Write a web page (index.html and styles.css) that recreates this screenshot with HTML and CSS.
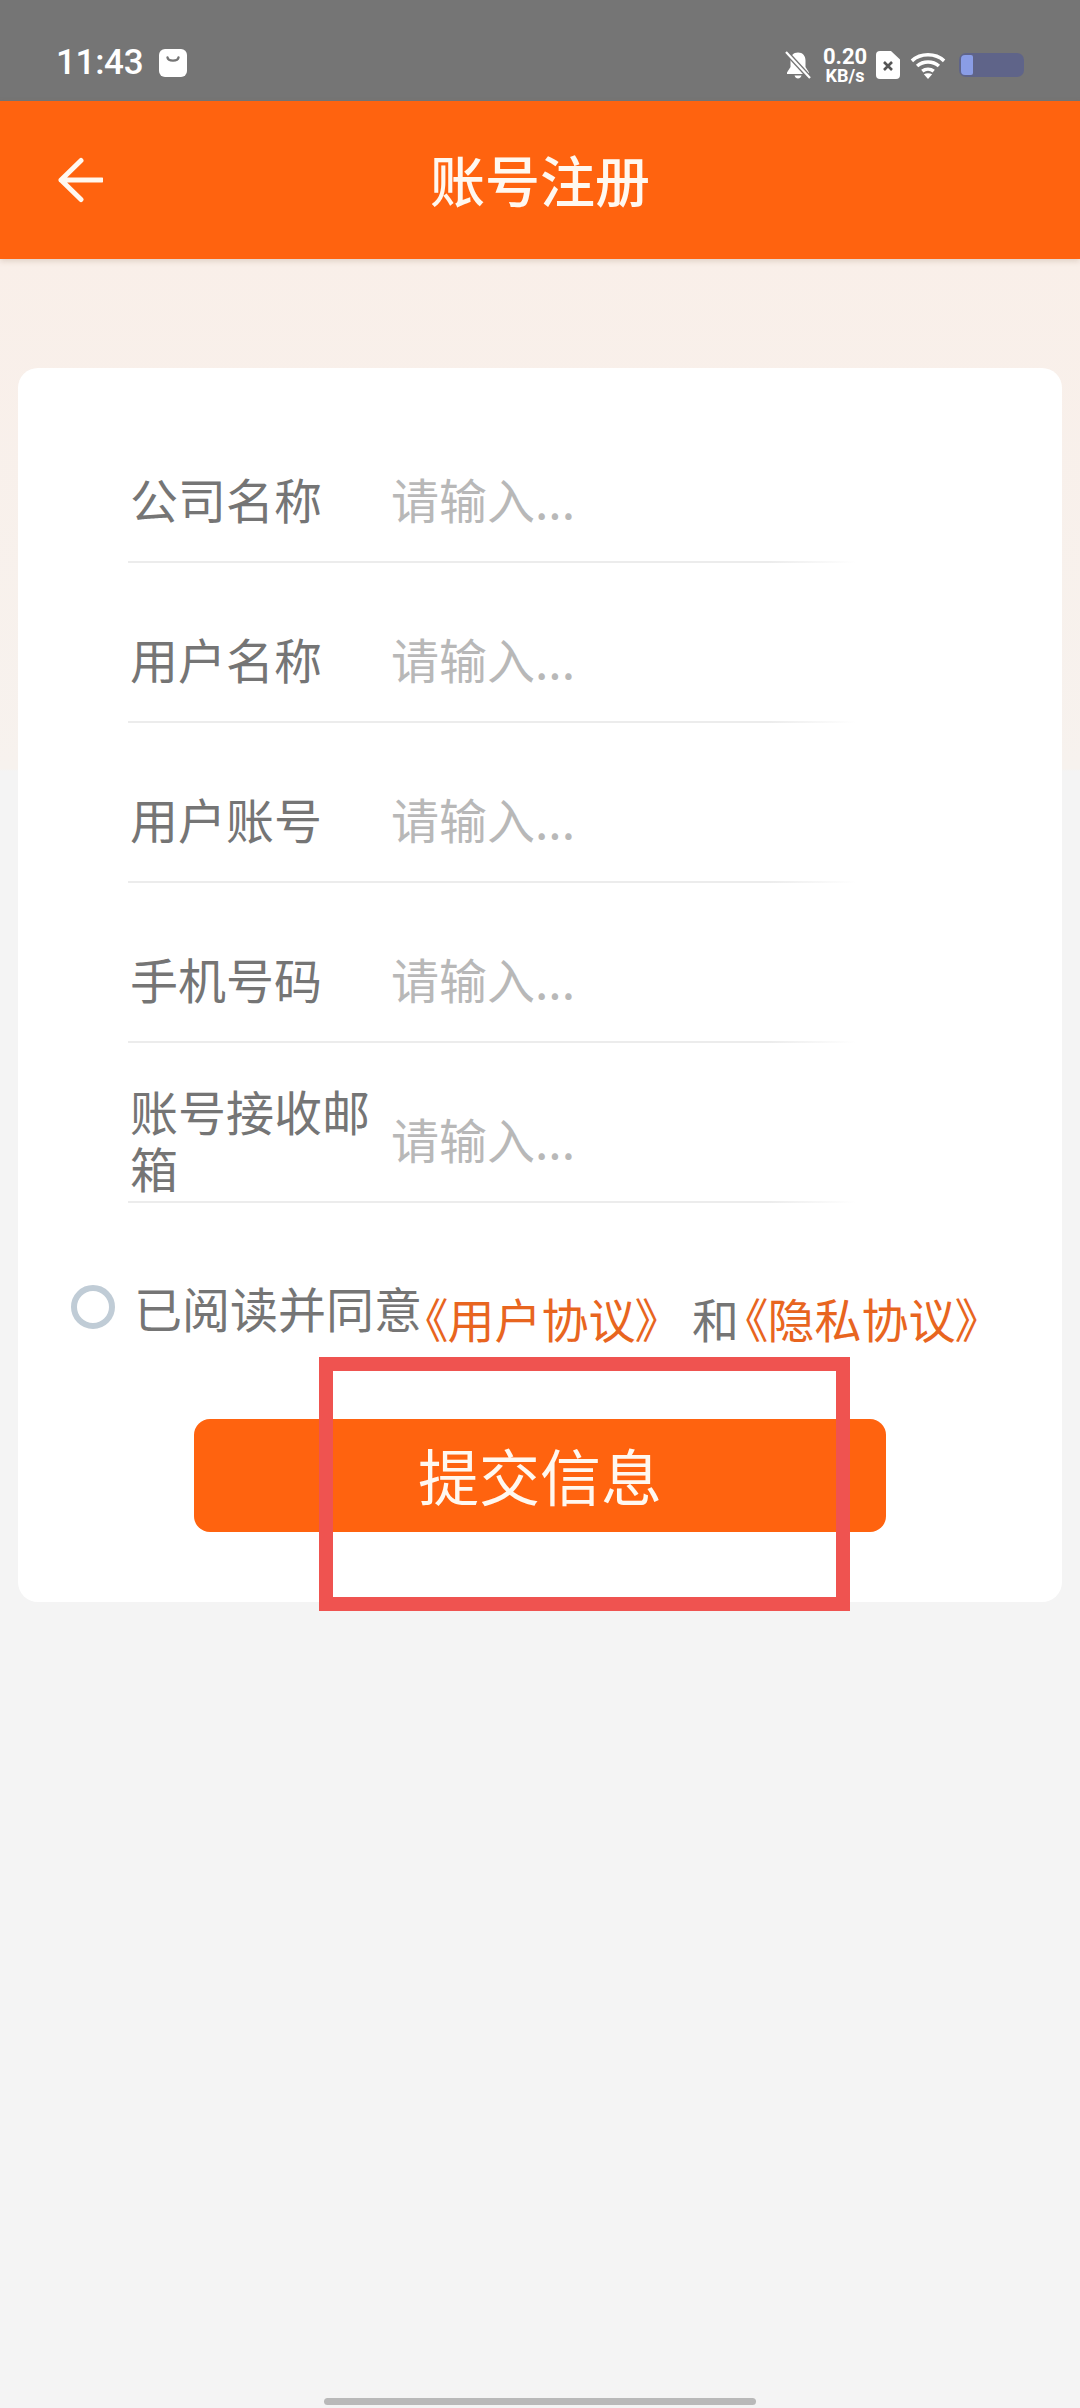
FILE: index.html
```html
<!DOCTYPE html>
<html lang="zh-CN">
<head>
    <meta charset="UTF-8">
    <meta name="viewport" content="width=device-width, initial-scale=1.0">
    <title>账号注册</title>
    <link rel="stylesheet" href="styles.css">
</head>
<body>
    <div class="page">
        <div class="status-bar">
            <div class="status-left">
                <span class="clock">11:43</span>
                <svg class="icon-bag" viewBox="0 0 28 28">
                    <rect width="28" height="28" rx="6" fill="#fff"/>
                    <path d="M8.500 8.500c.8 4.200 10.200 4.200 11 0" fill="none" stroke="#757575" stroke-width="2.400" stroke-linecap="round"/>
                </svg>
            </div>
            <div class="status-right">
                <svg class="icon-bell" viewBox="0 0 26 28">
                    <path d="M13 1.500c-4.800 0-7.500 3.400-7.500 8v6.500L2 21.500v1.500h22v-1.500L20.500 16V9.500c0-4.600-2.700-8-7.500-8z" fill="#fff"/>
                    <path d="M9.500 24.500h7c-.5 2-2 3-3.500 3s-3-1-3.500-3z" fill="#fff"/>
                    <path d="M1 1l24 26" stroke="#757575" stroke-width="5"/>
                    <path d="M1 1l24 26" stroke="#fff" stroke-width="2.200"/>
                </svg>
                <div class="net-speed">
                    <span class="net-value">0.20</span>
                    <span class="net-unit">KB/s</span>
                </div>
                <svg class="icon-sim" viewBox="0 0 24 28">
                    <path d="M4 0h11l9 8.500V24a4 4 0 0 1-4 4H4a4 4 0 0 1-4-4V4a4 4 0 0 1 4-4z" fill="#fff"/>
                    <path d="M8 11l8 8M16 11l-8 8" stroke="#555" stroke-width="2.600"/>
                </svg>
                <svg class="icon-wifi" viewBox="0 0 34 26">
                    <path d="M1.500 8.500C10 .8 24 .8 32.500 8.500M6.500 13.500c6-5.200 15-5.200 21 0M11.500 18.500c3.200-2.600 7.800-2.600 11 0" fill="none" stroke="#fff" stroke-width="3.400"/>
                    <path d="M13 21.500c2.200-1.500 5.800-1.500 8 0L17 26z" fill="#fff"/>
                </svg>
                <div class="battery"><div class="battery-level"></div></div>
            </div>
        </div>

        <header class="top-bar">
            <svg class="icon-back" viewBox="0 0 46 46">
                <path d="M24 3.500L4 23l20 19.500M4 23h41" fill="none" stroke="#fff8f0" stroke-width="5" stroke-linecap="round" stroke-linejoin="round"/>
            </svg>
            <h1 class="top-title">账号注册</h1>
        </header>

        <main class="content">
            <section class="card">
                <div class="form">
                    <div class="form-row">
                        <div class="form-label">公司名称</div>
                        <div class="form-input">请输入...</div>
                    </div>
                    <div class="form-row">
                        <div class="form-label">用户名称</div>
                        <div class="form-input">请输入...</div>
                    </div>
                    <div class="form-row">
                        <div class="form-label">用户账号</div>
                        <div class="form-input">请输入...</div>
                    </div>
                    <div class="form-row">
                        <div class="form-label">手机号码</div>
                        <div class="form-input">请输入...</div>
                    </div>
                    <div class="form-row">
                        <div class="form-label">账号接收邮箱</div>
                        <div class="form-input">请输入...</div>
                    </div>
                </div>

                <div class="agree">
                    <span class="agree-check"></span>
                    <span class="agree-text">已阅读并同意</span>
                    <span class="agree-links">
                        <a class="agree-link">《用户协议》</a>
                        <span class="agree-and">和</span>
                        <a class="agree-link">《隐私协议》</a>
                    </span>
                </div>

                <button class="submit">提交信息</button>
            </section>
        </main>

        <div class="home-bar"></div>

        <!-- red annotation box from the screenshot -->
        <div class="highlight"></div>
    </div>
</body>
</html>
```

FILE: styles.css
```css
* {
    box-sizing: border-box;
}

body {
    margin: 0;
    font-family: "Noto Sans CJK SC", "Noto Sans", sans-serif;
    background: #f4f4f4;
}

.page {
    position: relative;
    width: 1080px;
    height: 2408px;
    display: flex;
    flex-direction: column;
    overflow: hidden;
    background: #f4f4f4;
}

/* Status bar */
.status-bar {
    height: 101px;
    flex: none;
    padding: 47px 56px 0;
    display: flex;
    justify-content: space-between;
    align-items: flex-start;
    background: #757575;
    color: #fff;
}

.status-left {
    display: flex;
    align-items: center;
    gap: 16px;
    height: 32px;
}

.clock {
    font-family: Roboto, sans-serif;
    font-size: 35px;
    font-weight: 500;
    line-height: 32px;
    letter-spacing: -0.3px;
}

.icon-bag {
    width: 28px;
    height: 28px;
}

.status-right {
    display: flex;
    align-items: center;
    height: 36px;
}

.icon-bell {
    width: 26px;
    height: 28px;
    margin-right: 10px;
}

.net-speed {
    width: 48px;
    display: flex;
    flex-direction: column;
    align-items: center;
    font-family: Roboto, sans-serif;
    font-weight: 700;
    margin-right: 7px;
}

.net-value {
    font-size: 22px;
    line-height: 20px;
}

.net-unit {
    font-size: 18px;
    line-height: 17px;
}

.icon-sim {
    width: 24px;
    height: 28px;
    margin-right: 10px;
}

.icon-wifi {
    width: 36px;
    height: 27px;
    margin-right: 13px;
}

.battery {
    width: 65px;
    height: 24px;
    padding: 2px;
    border-radius: 7px;
    background: #5f6489;
}

.battery-level {
    width: 12px;
    height: 20px;
    border-radius: 4px 2px 2px 4px;
    background: #8a9de6;
}

/* Header */
.top-bar {
    position: relative;
    height: 158px;
    flex: none;
    padding-left: 57px;
    display: flex;
    align-items: center;
    background: #ff630f;
    box-shadow: 0 2px 6px rgba(120, 80, 50, 0.2);
}

.icon-back {
    width: 46px;
    height: 46px;
}

.top-title {
    flex: 1;
    margin: -4px 103px 0 -46px;
    padding-left: 46px;
    text-align: center;
    font-size: 55px;
    font-weight: 500;
    line-height: 70px;
    color: #fff8f0;
}

/* Content */
.content {
    flex: 1;
    padding: 109px 18px 0;
    background: linear-gradient(180deg, #f9efe9 0, #f7f2ee 510px, #f4f4f4 512px);
}

.card {
    height: 1234px;
    padding-top: 35px;
    border-radius: 20px;
    background: #fff;
}

.form {
    width: 727px;
    margin-left: 110px;
}

.form-row {
    height: 160px;
    padding-top: 33px;
    display: flex;
    align-items: center;
    border-bottom: 2px solid;
    border-image: linear-gradient(90deg, #ececec 88%, #fff) 1;
}

.form-label {
    width: 263px;
    flex: none;
    padding-left: 2px;
    font-size: 48px;
    line-height: 57px;
    color: #757575;
}

.form-input {
    font-size: 48px;
    line-height: 57px;
    color: #b8b8b8;
}

/* Agreement */
.agree {
    margin: 76px 0 0 53px;
    display: flex;
    align-items: flex-start;
    font-size: 48px;
    line-height: 57px;
    white-space: nowrap;
}

.agree-check {
    width: 44px;
    height: 44px;
    margin: 6px 19px 0 0;
    flex: none;
    border: 6px solid #c0ccd6;
    border-radius: 50%;
}

.agree-text {
    color: #757575;
}

.agree-links {
    margin: 10px 0 0 2px;
    display: flex;
    font-size: 47px;
}

.agree-link {
    color: #e8651f;
    font-feature-settings: "palt";
}

.agree-and {
    margin: 0 5px 0 33px;
    color: #757575;
}

/* Submit */
.submit {
    display: block;
    width: 692px;
    height: 113px;
    margin: 73px 0 0 176px;
    padding: 0 0 2px;
    border: none;
    border-radius: 16px;
    background: #ff630f;
    color: #fff8f0;
    font-family: inherit;
    font-size: 61px;
    line-height: 111px;
}

.home-bar {
    position: absolute;
    left: 324px;
    top: 2398px;
    width: 432px;
    height: 7px;
    border-radius: 4px;
    background: #b9b9b9;
}

.highlight {
    position: absolute;
    left: 319px;
    top: 1357px;
    width: 531px;
    height: 254px;
    border: 14px solid #ef5350;
}
```
